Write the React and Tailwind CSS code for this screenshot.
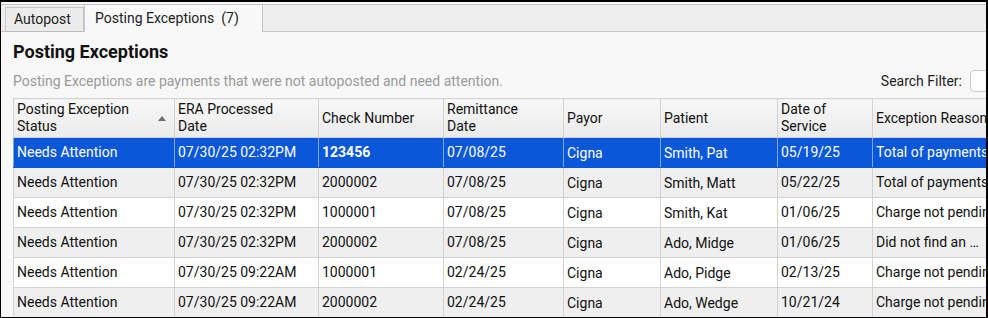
const columns = [
  { label: 'Posting Exception Status', width: 161, sort: true },
  { label: 'ERA Processed Date', width: 144 },
  { label: 'Check Number', width: 125 },
  { label: 'Remittance Date', width: 120 },
  { label: 'Payor', width: 97, nudge: true },
  { label: 'Patient', width: 117, nudge: true },
  { label: 'Date of Service', width: 95 },
  { label: 'Exception Reason', width: 180 },
]

const rows = [
  ['Needs Attention', '07/30/25 02:32PM', '123456', '07/08/25', 'Cigna', 'Smith, Pat', '05/19/25', 'Total of payments does not match'],
  ['Needs Attention', '07/30/25 02:32PM', '2000002', '07/08/25', 'Cigna', 'Smith, Matt', '05/22/25', 'Total of payments does not match'],
  ['Needs Attention', '07/30/25 02:32PM', '1000001', '07/08/25', 'Cigna', 'Smith, Kat', '01/06/25', 'Charge not pending'],
  ['Needs Attention', '07/30/25 02:32PM', '2000002', '07/08/25', 'Cigna', 'Ado, Midge', '01/06/25', 'Did not find an …'],
  ['Needs Attention', '07/30/25 09:22AM', '1000001', '02/24/25', 'Cigna', 'Ado, Pidge', '02/13/25', 'Charge not pending'],
  ['Needs Attention', '07/30/25 09:22AM', '2000002', '02/24/25', 'Cigna', 'Ado, Wedge', '10/21/24', 'Charge not pending'],
]

const headerLines = {
  'Posting Exception Status': ['Posting Exception', 'Status'],
  'ERA Processed Date': ['ERA Processed', 'Date'],
  'Remittance Date': ['Remittance', 'Date'],
  'Date of Service': ['Date of', 'Service'],
}

function HeaderCell({ col }) {
  const lines = headerLines[col.label]
  return (
    <th className="relative border border-[#d2d2d2] bg-gradient-to-b from-[#f7f7f7] to-[#ebebeb] px-[3px] text-left align-middle font-normal">
      {lines ? (
        <div className="leading-[17px]">
          <div>{lines[0]}</div>
          <div>{lines[1]}</div>
        </div>
      ) : (
        <div className="whitespace-nowrap leading-[17px]">{col.label}</div>
      )}
      {col.sort && (
        <span className="absolute right-[8px] top-[17px] h-0 w-0 border-x-[4px] border-b-[5px] border-x-transparent border-b-[#6f6f6f]" />
      )}
    </th>
  )
}

export default function App() {
  return (
    <div
      className="h-[318px] w-[988px] overflow-hidden border border-r-2 border-t-2 border-black bg-[#f8f8f8] text-[#111]"
      style={{ fontFamily: 'Roboto, "Liberation Sans", sans-serif' }}
    >
      {/* Tabs */}
      <div className="mt-[2px] flex h-[28px] items-end border-y border-[#c6c6c6] bg-[#eeeeee] pl-[4px]">
        <div className="mb-[-1px] flex h-[25px] w-[79px] items-center border border-[#c6c6c6] border-b-[#bdbdbd] bg-[#ececec] pl-[8px] text-[14px] text-[#222]">
          Autopost
        </div>
        <div className="mb-[-1px] flex h-[28px] w-[179px] items-center whitespace-pre border border-b-0 border-[#c6c6c6] bg-[#f8f8f8] pl-[10px] text-[14px] text-[#222]">
          {'Posting Exceptions  (7)'}
        </div>
      </div>

      {/* Header */}
      <div className="px-[12px]">
        <h1 className="mt-[8px] text-[18px] font-bold leading-[24px] text-[#111]">Posting Exceptions</h1>
        <div className="mt-[6px] flex h-[22px] items-center justify-between">
          <p className="text-[14px] text-[#9a9a9a]">
            Posting Exceptions are payments that were not autoposted and need attention.
          </p>
          <div className="mr-[-36px] flex items-center gap-[8px]">
            <span className="text-[14px] text-[#222]">Search Filter:</span>
            <div className="h-[22px] w-[40px] rounded-[4px] border border-[#c8c8c8] bg-white" />
          </div>
        </div>
      </div>

      {/* Table */}
      <div className="ml-[12px] mt-[6px] w-[1100px]">
        <table
          className="table-fixed border-collapse text-[14px]"
          style={{ width: columns.reduce((s, c) => s + c.width, 0) }}
        >
          <colgroup>
            {columns.map((c) => (
              <col key={c.label} style={{ width: c.width }} />
            ))}
          </colgroup>
          <thead>
            <tr className="h-[39px]">
              {columns.map((c) => (
                <HeaderCell key={c.label} col={c} />
              ))}
            </tr>
          </thead>
          <tbody>
            {rows.map((r, i) => {
              const selected = i === 0
              const bg = selected ? 'bg-[#0a57d9] text-white' : i % 2 === 1 ? 'bg-[#efefef]' : 'bg-white'
              return (
                <tr key={i} className={`h-[30px] ${bg}`}>
                  {r.map((cell, j) => (
                    <td
                      key={j}
                      className={`overflow-hidden whitespace-nowrap border border-[#d2d2d2] px-[3px] align-middle ${columns[j].nudge ? 'pt-[2px]' : ''} ${selected ? 'border-x-[#7fa6e8] border-y-[#0a57d9]' : ''}`}
                    >
                      {selected && j === 2 ? <span className="font-bold">{cell}</span> : cell}
                    </td>
                  ))}
                </tr>
              )
            })}
          </tbody>
        </table>
      </div>
    </div>
  )
}
